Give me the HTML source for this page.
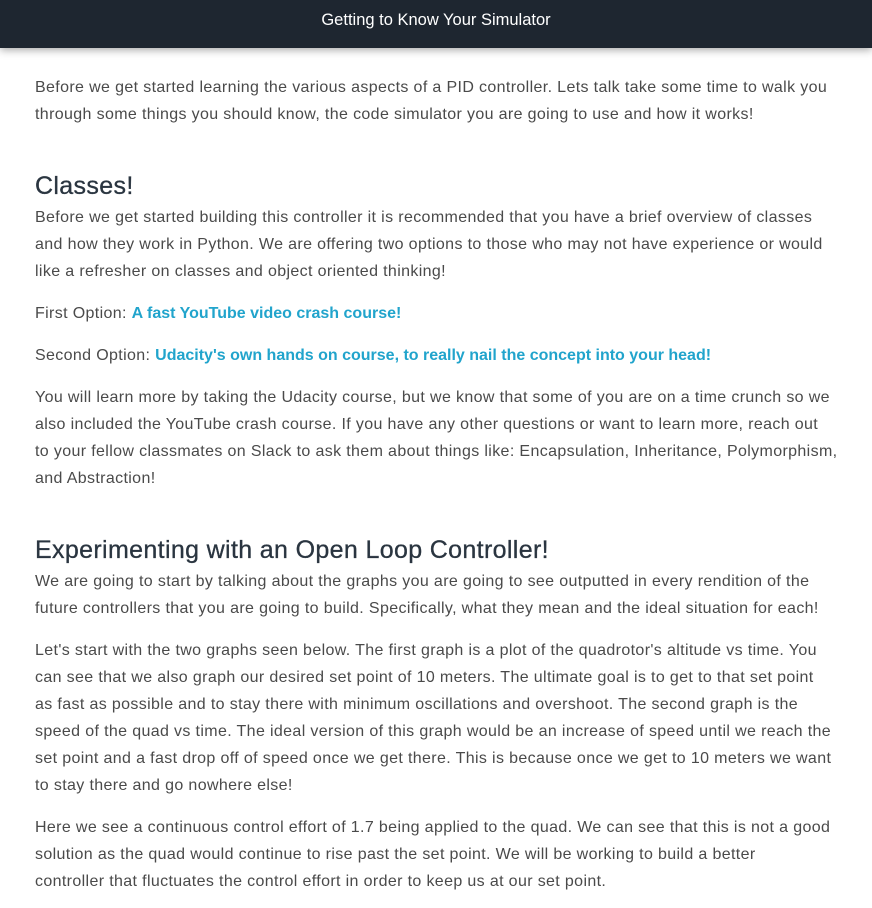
<!DOCTYPE html>
<html><head><meta charset="utf-8"><style>
body{margin:0;width:872px;height:908px;overflow:hidden;background:#fff;font-family:"Liberation Sans",sans-serif;color:#4a4a4a;}
.hd{position:absolute;left:0;top:0;width:872px;height:48px;background:#1e2630;color:#fff;text-align:center;line-height:40px;font-size:16.5px;box-shadow:0 2px 8px rgba(0,0,0,.35);}
.b{position:absolute;left:35px;font-size:16px;line-height:27px;white-space:nowrap;letter-spacing:.36px;}
h2{position:absolute;left:35px;margin:0;font-weight:normal;font-size:25px;color:#2a3540;white-space:nowrap;line-height:30px;letter-spacing:.35px;-webkit-text-stroke:.3px #2a3540;}
a{color:#21a4cc;font-weight:bold;text-decoration:none;letter-spacing:0}
</style></head><body>
<div class="hd">Getting to Know Your Simulator</div>
<div class="b" style="top:74px">Before we get started learning the various aspects of a PID controller. Lets talk take some time to walk you<br>through some things you should know, the code simulator you are going to use and how it works!</div>
<h2 style="top:171px">Classes!</h2>
<div class="b" style="top:204px">Before we get started building this controller it is recommended that you have a brief overview of classes<br>and how they work in Python. We are offering two options to those who may not have experience or would<br>like a refresher on classes and object oriented thinking!</div>
<div class="b" style="top:300px">First Option: <a>A fast YouTube video crash course!</a></div>
<div class="b" style="top:342px">Second Option: <a>Udacity's own hands on course, to really nail the concept into your head!</a></div>
<div class="b" style="top:384px">You will learn more by taking the Udacity course, but we know that some of you are on a time crunch so we<br>also included the YouTube crash course. If you have any other questions or want to learn more, reach out<br>to your fellow classmates on Slack to ask them about things like: Encapsulation, Inheritance, Polymorphism,<br>and Abstraction!</div>
<h2 style="top:535px">Experimenting with an Open Loop Controller!</h2>
<div class="b" style="top:568px">We are going to start by talking about the graphs you are going to see outputted in every rendition of the<br>future controllers that you are going to build. Specifically, what they mean and the ideal situation for each!</div>
<div class="b" style="top:637px">Let's start with the two graphs seen below. The first graph is a plot of the quadrotor's altitude vs time. You<br>can see that we also graph our desired set point of 10 meters. The ultimate goal is to get to that set point<br>as fast as possible and to stay there with minimum oscillations and overshoot. The second graph is the<br>speed of the quad vs time. The ideal version of this graph would be an increase of speed until we reach the<br>set point and a fast drop off of speed once we get there. This is because once we get to 10 meters we want<br>to stay there and go nowhere else!</div>
<div class="b" style="top:814px">Here we see a continuous control effort of 1.7 being applied to the quad. We can see that this is not a good<br>solution as the quad would continue to rise past the set point. We will be working to build a better<br>controller that fluctuates the control effort in order to keep us at our set point.</div>
</body></html>
